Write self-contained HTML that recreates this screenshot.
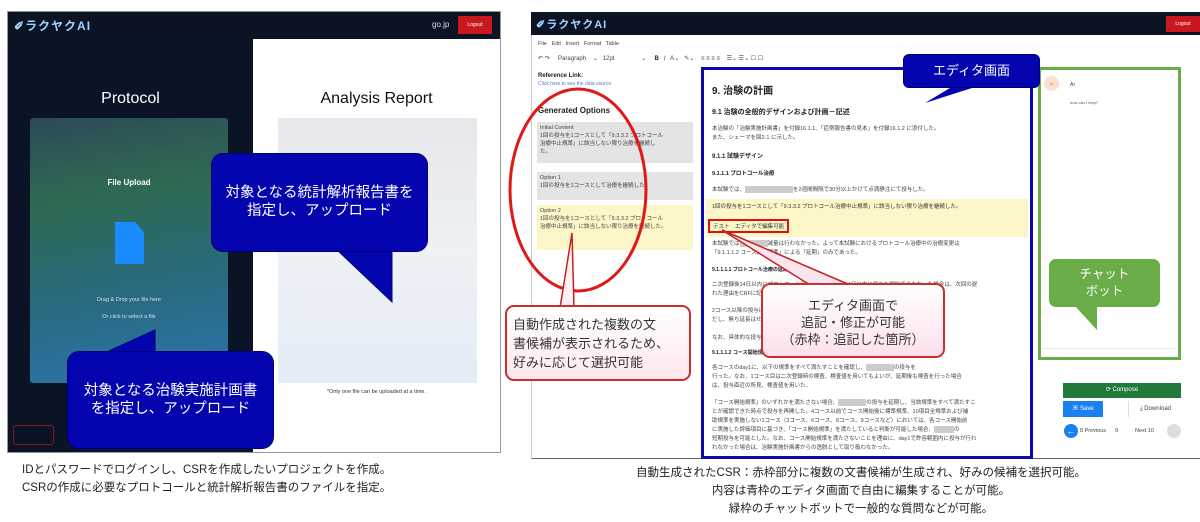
<!DOCTYPE html>
<html><head><meta charset="utf-8"><style>
*{margin:0;padding:0;box-sizing:border-box}
body{width:1200px;height:522px;background:#fff;position:relative;overflow:hidden;font-family:"Liberation Sans","Noto Sans CJK JP",sans-serif}
.a{position:absolute}
.cj{font-family:"Liberation Sans","Noto Sans CJK JP",sans-serif}
.bl{background:#0505b0;border:1.5px solid #00007a;border-radius:12px;color:#fff;text-align:center;font-size:14.5px;line-height:18px}
.t{font-size:5.5px;color:#444;white-space:nowrap}
.g{background:#ccc;display:inline-block;height:7px;vertical-align:middle}
</style></head><body>
<!-- LEFT PANEL -->
<div class="a" style="left:7px;top:11px;width:494px;height:442px;border:1px solid #999;background:#fff"></div>
<div class="a" style="left:8px;top:12px;width:492px;height:27px;background:#0c1424"></div>
<div class="a" style="left:14px;top:17px;color:#9fd2ff;font-size:12px;font-weight:bold;letter-spacing:1px">✐ラクヤクAI</div>
<div class="a" style="left:432px;top:20px;color:#ddd;font-size:8px">go.jp</div>
<div class="a" style="left:458px;top:16px;width:34px;height:18px;background:#c8181e;color:#fff;font-size:5px;text-align:center;line-height:18px">Logout</div>
<div class="a" style="left:8px;top:39px;width:245px;height:413px;background:#0a1426"></div>
<div class="a" style="left:8px;top:90px;width:245px;text-align:center;color:#fff;font-size:16px">Protocol</div>
<div class="a" style="left:30px;top:118px;width:198px;height:265px;border-radius:3px;background:linear-gradient(170deg,#2d4a58 0%,#2e6a52 30%,#2a6a7a 60%,#2a74ae 100%)"></div>
<div class="a" style="left:30px;top:178px;width:198px;text-align:center;color:#fff;font-size:8px;font-weight:bold">File Upload</div>
<div class="a" style="left:115px;top:222px;width:29px;height:42px;background:#1a8cff;clip-path:polygon(0 0,70% 0,100% 25%,100% 100%,0 100%)"></div>
<div class="a" style="left:30px;top:297px;width:198px;text-align:center;color:#dde;font-size:5.5px">Drag &amp; Drop your file here</div>
<div class="a" style="left:30px;top:314px;width:198px;text-align:center;color:#dde;font-size:5.5px">Or click to select a file</div>
<div class="a" style="left:13px;top:425px;width:41px;height:20px;border:1px solid #8a1a1a;border-radius:3px"></div>
<div class="a" style="left:253px;top:90px;width:247px;text-align:center;color:#111;font-size:16px">Analysis Report</div>
<div class="a" style="left:278px;top:118px;width:199px;height:265px;background:linear-gradient(180deg,#e6e7ea,#eef1f5 50%,#e4ecf7)"></div>
<div class="a" style="left:253px;top:389px;width:247px;text-align:center;color:#333;font-size:5.5px">*Only one file can be uploaded at a time.</div>
<svg class="a" style="left:0;top:0" width="520" height="460">
<polygon points="335,248 392,248 392,302" fill="#0505b0" stroke="#00007a" stroke-width="1"/>
<polygon points="100,355 155,330 155,355" fill="#0505b0" stroke="#00007a" stroke-width="1"/>
</svg>
<div class="a bl" style="left:211px;top:153px;width:217px;height:99px;padding-top:30px">対象となる統計解析報告書を<br>指定し、アップロード</div>
<div class="a bl" style="left:67px;top:351px;width:207px;height:98px;padding-top:30px">対象となる治験実施計画書<br>を指定し、アップロード</div>

<!-- RIGHT PANEL -->
<div class="a" style="left:531px;top:12px;width:669px;height:447px;background:#fff;border-bottom:1.5px solid #666;border-left:1px solid #ccc"></div>
<div class="a" style="left:531px;top:12px;width:669px;height:23px;background:#0c1424"></div>
<div class="a" style="left:536px;top:16px;color:#9fd2ff;font-size:11px;font-weight:bold;letter-spacing:1px">✐ラクヤクAI</div>
<div class="a" style="left:1166px;top:16px;width:34px;height:16px;background:#c8181e;color:#fff;font-size:5px;line-height:16px;text-align:center">Logout</div>
<div class="a t" style="left:538px;top:41px">File &nbsp; Edit &nbsp; Insert &nbsp; Format &nbsp; Table</div>
<div class="a t" style="left:538px;top:55px;font-size:6px">↶ ↷ &nbsp;&nbsp;&nbsp; Paragraph &nbsp;&nbsp; ⌄ &nbsp; 12pt &nbsp;&nbsp;&nbsp;&nbsp;&nbsp;&nbsp;&nbsp;&nbsp;&nbsp;&nbsp;&nbsp;&nbsp;&nbsp;&nbsp; ⌄ &nbsp;&nbsp;&nbsp; <b style="color:#222">B</b> &nbsp; <i>I</i> &nbsp; A⌄ &nbsp; ✎⌄ &nbsp;&nbsp; ≡ ≡ ≡ ≡ &nbsp;&nbsp; ☰⌄ ☰⌄ ☐ ☐</div>
<div class="a" style="left:538px;top:73px;font-size:6px;font-weight:bold;color:#222">Reference Link:</div>
<div class="a" style="left:538px;top:81px;font-size:5px;color:#4a7fd8">Click here to see the data source</div>
<div class="a" style="left:538px;top:106px;font-size:8px;font-weight:bold;color:#222">Generated Options</div>
<div class="a" style="left:537px;top:122px;width:156px;height:41px;background:#e4e4e6;padding:3px" ><div class="t">Initial Content<br>1回の投与を1コースとして「9.3.3.2 プロトコール<br>治療中止規準」に該当しない限り治療を継続し<br>た。</div></div>
<div class="a" style="left:537px;top:172px;width:156px;height:28px;background:#e4e4e6;padding:3px"><div class="t">Option 1<br>1回の投与を1コースとして治療を継続した。</div></div>
<div class="a" style="left:537px;top:205px;width:156px;height:45px;background:#fdf6c8;padding:3px"><div class="t">Option 2<br>1回の投与を1コースとして「9.3.3.2 プロトコール<br>治療中止規準」に該当しない限り治療を継続した。</div></div>
<div class="a" style="left:701px;top:67px;width:332px;height:392px;border:3px solid #0a0ab0;background:#fff;overflow:hidden;padding:12px 8px">
 <div style="font-size:10px;font-weight:bold;color:#222;margin-bottom:10px">9. 治験の計画</div>
 <div style="font-size:7px;font-weight:bold;color:#222;margin-bottom:8px">9.1 治験の全般的デザインおよび計画－記述</div>
 <div class="t" style="line-height:9px;margin-bottom:8px">本治験の「治験実施計画書」を付録16.1.1、「症例報告書の見本」を付録16.1.2 に添付した。<br>また、シェーマを図2-1 に示した。</div>
 <div style="font-size:6px;font-weight:bold;color:#222;margin-bottom:9px">9.1.1 試験デザイン</div>
 <div style="font-size:5.5px;font-weight:bold;color:#222;margin-bottom:8px">9.1.1.1 プロトコール治療</div>
 <div class="t" style="margin-bottom:6px">本試験では、<span class="g" style="width:48px"></span>を2週間間隔で30分以上かけて点滴静注にて投与した。</div>
 <div class="t" style="background:#fdf6c8;margin:0 -6px;padding:3px 6px;color:#333">1回の投与を1コースとして「9.3.3.2 プロトコール治療中止規準」に該当しない限り治療を継続した。</div>
 <div style="background:#fdf6c8;margin:0 -6px;padding:2px 6px 4px"><span class="t" style="border:2.5px solid #e01010;padding:1px 3px;display:inline-block;margin-left:-4px;color:#333">テスト　エディタで編集可能</span></div>
 <div class="t" style="line-height:9px;margin:3px 0 8px">本試験では<span class="g" style="width:28px"></span>減量は行わなかった。よって本試験におけるプロトコール治療中の治療変更は<br>「9.1.1.1.2 コース開始規準」による「延期」のみであった。</div>
 <div style="font-size:5px;font-weight:bold;color:#222;margin-bottom:8px">9.1.1.1.1 プロトコール治療の延期</div>
 <div class="t" style="line-height:9px;margin-bottom:8px">二次登録後14日以内にプロトコール治療を開始した。14日以内に投与を開始できなかった場合は、次回の遅<br>れた理由をCRFに記載した。</div>
 <div class="t" style="line-height:9px;margin-bottom:8px">2コース以降の投与は、前コース投与日から2週間後に行い、3日前～3日を許容した。た<br>だし、無ち延長はせず、その場合はコース開始規準を満たすことにした。</div>
 <div class="t" style="margin-bottom:8px">なお、具体的な投与スケジュールは</div>
 <div style="font-size:5px;font-weight:bold;color:#222;margin-bottom:8px">9.1.1.1.2 コース開始規準</div>
 <div class="t" style="line-height:9px;margin-bottom:8px">各コースのday1に、以下の規準をすべて満たすことを確認し、<span class="g" style="width:28px"></span>の投与を<br>行った。なお、1コース目は二次登録時の検査、検査値を用いてもよいが、延期後も検査を行った場合<br>は、投与直近の所見、検査値を用いた。</div>
 <div class="t" style="line-height:9px">「コース開始規準」のいずれかを満たさない場合、<span class="g" style="width:28px"></span>の投与を延期し、当該規準をすべて満たすこ<br>とが確認できた時点で投与を再開した。4コース以前でコース開始後に標準規準、10項目全規準および補<br>助規準を実施しない1コース（3コース、6コース、8コース、9コースなど）においては、各コース開始前<br>に実施した評価項目に基づき、「コース開始規準」を満たしていると判断が可能した場合、<span class="g" style="width:20px"></span>の<br>短期投与を可能とした。なお、コース開始規準を満たさないことを理由に、day1で許容範囲内に投与が行わ<br>れなかった場合は、治験実施計画書からの逸脱として取り扱わなかった。</div>
</div>
<div class="a" style="left:1038px;top:67px;width:143px;height:293px;border:3px solid #6aac48;background:#fff"></div>
<div class="a" style="left:1044px;top:76px;width:15px;height:15px;border-radius:50%;background:#fbe0d0;font-size:4px;color:#c77;text-align:center;line-height:15px">AI</div>
<div class="a" style="left:1070px;top:82px;font-size:5px;color:#444">AI</div>
<div class="a" style="left:1070px;top:100px;font-size:4px;color:#555">how can I help?</div>
<div class="a" style="left:1042px;top:348px;width:134px;height:1px;background:#e6e6e6"></div>
<div class="a" style="left:1063px;top:383px;width:118px;height:15px;background:#1f7a3c;color:#fff;font-size:6px;text-align:center;line-height:15px">⟳ Compose</div>
<div class="a" style="left:1063px;top:401px;width:40px;height:16px;background:#1a7ff0;color:#fff;font-size:6px;text-align:center;line-height:16px">▣ Save</div>
<div class="a" style="left:1128px;top:401px;width:54px;height:16px;border-left:1px solid #ddd;color:#444;font-size:6px;text-align:center;line-height:16px">⤓ Download</div>
<div class="a" style="left:1064px;top:424px;width:14px;height:14px;border-radius:50%;background:#1a7ff0;color:#fff;font-size:9px;text-align:center;line-height:14px">←</div>
<div class="a" style="left:1080px;top:428px;font-size:5.5px;color:#444">8 Previous &nbsp;&nbsp;&nbsp;&nbsp; 9 &nbsp;&nbsp;&nbsp;&nbsp;&nbsp;&nbsp;&nbsp;&nbsp;&nbsp; Next 10</div>
<div class="a" style="left:1167px;top:424px;width:14px;height:14px;border-radius:50%;background:#ddd"></div>

<svg class="a" style="left:0;top:0" width="1200" height="522">
<ellipse cx="578" cy="190" rx="68" ry="101" fill="none" stroke="#e01818" stroke-width="3"/>
<polygon points="560,308 572,233 574,308" fill="#fff0f3" stroke="#c82020" stroke-width="1.5"/>
<polygon points="810,285 722,230 850,285" fill="#fce4ee" stroke="#c82020" stroke-width="1.5"/>
<polygon points="950,88 972,88 925,103" fill="#0505b0"/>
<polygon points="1075,306 1097,306 1097,330" fill="#6aac48"/>
</svg>
<div class="a cj" style="left:505px;top:305px;width:186px;height:76px;background:linear-gradient(180deg,#fff,#fde7ee);border:2px solid #c83030;border-radius:9px;font-size:13px;line-height:19px;padding:8px 6px;color:#333">自動作成された複数の文<br>書候補が表示されるため、<br>好みに応じて選択可能</div>
<div class="a cj" style="left:761px;top:283px;width:184px;height:75px;background:linear-gradient(180deg,#fff,#fde0ec);border:2px solid #c83030;border-radius:9px;font-size:13px;line-height:17px;padding:12px 0;text-align:center;color:#333">エディタ画面で<br>追記・修正が可能<br>（赤枠：追記した箇所）</div>
<div class="a bl" style="left:903px;top:54px;width:137px;height:34px;line-height:32px;font-size:13px;border-radius:6px">エディタ画面</div>
<div class="a cj" style="left:1049px;top:259px;width:111px;height:48px;background:#6aac48;border-radius:7px;color:#fff;font-size:12.5px;line-height:17px;text-align:center;padding-top:7px">チャット<br>ボット</div>

<div class="a cj" style="left:22px;top:461px;font-size:11.5px;line-height:18px;color:#222">IDとパスワードでログインし、CSRを作成したいプロジェクトを作成。<br>CSRの作成に必要なプロトコールと統計解析報告書のファイルを指定。</div>
<div class="a cj" style="left:531px;top:464px;width:660px;text-align:center;font-size:11.5px;line-height:18px;color:#222">自動生成されたCSR：赤枠部分に複数の文書候補が生成され、好みの候補を選択可能。<br>内容は青枠のエディタ画面で自由に編集することが可能。<br>緑枠のチャットボットで一般的な質問などが可能。</div>
</body></html>
